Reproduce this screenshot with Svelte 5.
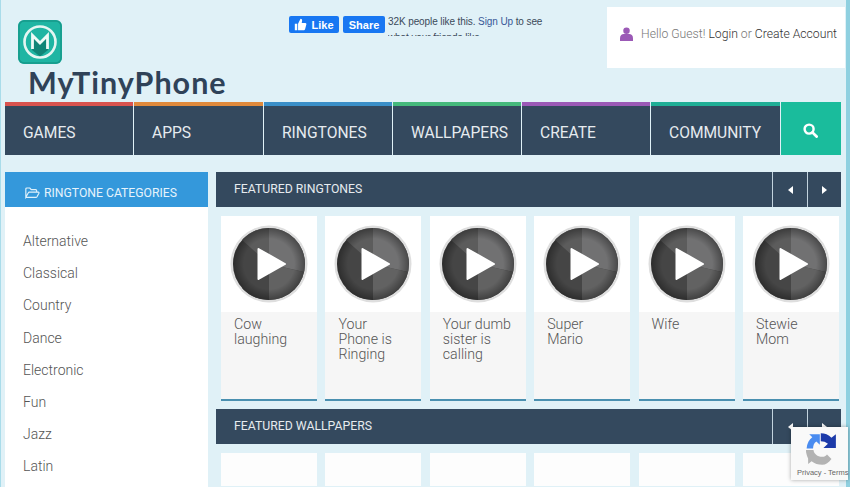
<script>
    const menu = [
        { label: 'GAMES', color: '#d9534f', width: 128 },
        { label: 'APPS', color: '#e08a3c', width: 129 },
        { label: 'RINGTONES', color: '#3a8fc8', width: 128 },
        { label: 'WALLPAPERS', color: '#45b97c', width: 128 },
        { label: 'CREATE', color: '#9b59b6', width: 128 },
        { label: 'COMMUNITY', color: '#1fae96', width: 129 }
    ];

    const categories = ['Alternative', 'Classical', 'Country', 'Dance', 'Electronic', 'Fun', 'Jazz', 'Latin'];

    const ringtones = ['Cow laughing', 'Your Phone is Ringing', 'Your dumb sister is calling', 'Super Mario', 'Wife', 'Stewie Mom'];
</script>

<div class="page">
    <header class="top">
        <div class="brand">
            <svg class="logo" viewBox="0 0 44 44" width="44" height="44">
                <rect width="44" height="44" rx="6" fill="#1fb5a3" />
                <rect x="1" y="1" width="42" height="42" rx="5" fill="none" stroke="#17998b" stroke-width="1.500" />
                <path d="M14 30 L14 16 L22 24 L30 16 L30 30 L22 36.500 Z" fill="#0f8577" />
                <circle cx="22" cy="22" r="15.500" fill="none" stroke="#e4f6f2" stroke-width="2.600" />
                <path d="M14.500 29 V15.500 L22 23 L29.500 15.500 V29" fill="none" stroke="#eefaf7" stroke-width="2.800" />
            </svg>
            <div class="wordmark">MyTinyPhone</div>
        </div>

        <div class="social">
            <span class="fb like">
                <svg viewBox="0 0 16 16" width="13" height="13"><path d="M1 7h3v8H1zM5 7l3-6c1.500 0 2 1 2 2l-.5 3H14c1 0 1.500 1 1.200 2l-1.500 5.500c-.2 1-1 1.500-2 1.500H5z" fill="#fff" /></svg>
                Like
            </span>
            <span class="fb share">Share</span>
            <p class="like-text">32K people like this. <span class="signup">Sign Up</span> to see what your friends like.</p>
        </div>

        <div class="account">
            <svg viewBox="0 0 14 15" width="13" height="14"><circle cx="7" cy="4" r="3.500" fill="#9b59b6" /><path d="M0 15v-3c0-3 2-4.500 4-4.500h6c2 0 4 1.500 4 4.500v3z" fill="#9b59b6" /></svg>
            <span class="hello">Hello Guest! <b>Login</b> or <b>Create Account</b></span>
        </div>
    </header>

    <nav class="menu">
        {#each menu as item}
            <a class="menu-item" style="width: {item.width}px; border-top-color: {item.color};">{item.label}</a>
        {/each}
        <button class="search" aria-label="Search">
            <svg viewBox="0 0 16 16" width="15" height="15"><circle cx="6.500" cy="6.500" r="4.800" fill="none" stroke="#fff" stroke-width="2.600" /><path d="M10 10l4.500 4.500" stroke="#fff" stroke-width="3" stroke-linecap="round" /></svg>
        </button>
    </nav>

    <div class="body">
        <aside class="side">
            <h2 class="side-title">
                <svg viewBox="0 0 18 14" width="15" height="12"><path d="M1 12V2.200C1 1.500 1.500 1 2.200 1h3.600l1.700 2h5.300c.7 0 1.200.5 1.200 1.200V6M1 12l3-5.300c.2-.4.600-.7 1.100-.7H16c.7 0 1 .6.700 1.200l-2.300 4.300c-.3.500-.7.800-1.200.8H2c-.6 0-1-.4-1-.9z" fill="none" stroke="#dff1fb" stroke-width="1.400" /></svg>
                RINGTONE CATEGORIES
            </h2>
            <ul class="cats">
                {#each categories as cat}
                    <li>{cat}</li>
                {/each}
            </ul>
        </aside>

        <main class="main">
            <div class="bar">
                <h2>FEATURED RINGTONES</h2>
                <span class="arrow"><i class="tri left"></i></span>
                <span class="arrow"><i class="tri right"></i></span>
            </div>
            <div class="cards">
                {#each ringtones as title}
                    <div class="card">
                        <div class="thumb">
                            <svg viewBox="0 0 78 78" width="78" height="78">
                                <defs>
                                    <radialGradient id="vignette">
                                        <stop offset="0.7" stop-color="#000" stop-opacity="0" />
                                        <stop offset="1" stop-color="#000" stop-opacity="0.35" />
                                    </radialGradient>
                                </defs>
                                <circle cx="39" cy="39" r="38.500" fill="#dedede" />
                                <circle cx="39" cy="39" r="36" fill="#454545" />
                                <path d="M39 3A36 36 0 0 1 74 47L39 39Z" fill="#717172" />
                                <path d="M39 39L74 47A36 36 0 0 1 39 75Z" fill="#626262" />
                                <path d="M39 39L39 75A36 36 0 0 1 12 63Z" fill="#464646" />
                                <path d="M39 3A36 36 0 0 0 12 15L39 39Z" fill="#5c5c5c" />
                                <circle cx="39" cy="39" r="36" fill="url(#vignette)" />
                                <path d="M28.500 24L55 39L28.500 54Z" fill="#fff" stroke="#fff" stroke-width="2" stroke-linejoin="round" />
                            </svg>
                        </div>
                        <div class="info">{title}</div>
                    </div>
                {/each}
            </div>
            <div class="bar">
                <h2>FEATURED WALLPAPERS</h2>
                <span class="arrow"><i class="tri left"></i></span>
                <span class="arrow"><i class="tri right"></i></span>
            </div>
            <div class="cards">
                {#each ringtones as title}
                    <div class="card blank"></div>
                {/each}
            </div>
        </main>
    </div>

    <div class="recaptcha">
        <svg viewBox="0 0 36 36" width="34" height="34">
            <path d="M1.700 17.500C2 12 4.500 8 7.700 5.500L4.500 2.300H15.700V13.500L12 10C9.500 11.500 8.800 14 8.500 17.500Z" fill="#4a8cf0" />
            <path d="M16.700 1.300C21 1.300 25 2.800 28 6L32.700 2.500V17H19.500L24.300 12.500C22 10.500 19.500 9.700 16.700 9.700Z" fill="#1c3aa9" />
            <path d="M1 19H9C9.500 23 13 26.300 18.300 26.300 20.500 26.300 22 25.500 23.300 23.700L28 28.500C25 32.500 22 34.700 18.300 34.700 14 34.700 10 33.700 7 31L3.300 34V28C2 25 1 22 1 19Z" fill="#b3b3b3" />
        </svg>
        <div class="terms">Privacy - Terms</div>
    </div>
</div>

<style>
    :global(body) {
        margin: 0;
        overflow: hidden;
        background: #e0f1f7;
    }

    .page {
        position: relative;
        height: 487px;
        box-sizing: border-box;
        padding: 0 5px 0 4px;
        font-family: Roboto, "Liberation Sans", sans-serif;
        border-left: 1px solid #a9dcea;
        border-right: 4px solid #8fd0e0;
    }

    .top {
        display: flex;
        height: 102px;
    }

    .brand {
        flex: none;
        width: 283px;
        padding: 20px 0 0 13px;
        box-sizing: border-box;
    }

    .logo {
        display: block;
    }

    .wordmark {
        margin: 1px 0 0 10px;
        font-family: Lato, sans-serif;
        font-weight: 700;
        font-size: 30.500px;
        line-height: 34px;
        letter-spacing: 1px;
        color: #2f4258;
        white-space: nowrap;
    }

    .social {
        flex: none;
        display: flex;
        align-items: flex-start;
        width: 318px;
        height: 36px;
        margin-left: 1px;
        overflow: hidden;
        padding-top: 16px;
        box-sizing: content-box;
    }

    .fb {
        display: flex;
        align-items: center;
        justify-content: center;
        gap: 4px;
        height: 17px;
        border-radius: 2px;
        background: #1877f2;
        color: #fff;
        font: 700 11px "Liberation Sans", sans-serif;
    }

    .like {
        width: 50px;
    }

    .share {
        width: 42px;
        margin-left: 4px;
    }

    .like-text {
        width: 160px;
        height: 22px;
        overflow: hidden;
        margin: -2px 0 0 3px;
        font: 10px/16px "Liberation Sans", sans-serif;
        letter-spacing: -0.1px;
        color: #3b4a5a;
    }

    .signup {
        color: #385898;
    }

    .account {
        flex: none;
        display: flex;
        align-items: center;
        gap: 8px;
        width: 238px;
        height: 61px;
        margin-top: 7px;
        padding: 0 0 7px 13px;
        box-sizing: border-box;
        background: #fff;
        font-size: 12.200px;
        font-weight: 300;
        color: #777;
        white-space: nowrap;
    }

    .hello b {
        font-weight: 300;
        color: #333;
    }

    .menu {
        display: flex;
        gap: 1px;
        width: 836px;
        height: 53px;
    }

    .menu-item {
        display: flex;
        align-items: center;
        box-sizing: border-box;
        padding: 4px 0 0 18px;
        border-top: 4px solid;
        background: #34495e;
        color: #e6ebef;
        font-size: 15.600px;
    }

    .search {
        flex: 1;
        display: flex;
        align-items: center;
        justify-content: center;
        border: 0;
        padding: 3px 2px 0 0;
        background: #1abc9c;
    }

    .body {
        display: flex;
        gap: 8px;
        width: 836px;
        margin-top: 17px;
    }

    .side {
        width: 203px;
        height: 315px;
        background: #fff;
    }

    .side-title {
        display: flex;
        align-items: center;
        gap: 4px;
        height: 35px;
        box-sizing: border-box;
        margin: 0;
        padding: 6px 0 0 20px;
        background: #3498db;
        color: #e6f3fb;
        font-size: 12.200px;
        font-weight: 400;
    }

    .cats {
        list-style: none;
        margin: 0;
        padding: 23px 0 0 18px;
    }

    .cats li {
        height: 32.200px;
        line-height: 22px;
        font-size: 14px;
        font-weight: 300;
        color: #555;
    }

    .main {
        flex: 1;
    }

    .bar {
        display: flex;
        align-items: center;
        height: 35px;
        background: #34495e;
    }

    .bar h2 {
        flex: 1;
        margin: 0;
        padding: 0 0 2px 18px;
        font-size: 12.250px;
        font-weight: 400;
        color: #e6ebef;
    }

    .arrow {
        display: flex;
        align-items: center;
        justify-content: center;
        width: 34px;
        height: 100%;
        border-left: 1px solid #c2d3de;
    }

    .arrow:last-child {
        width: 33px;
    }

    .tri {
        width: 0;
        height: 0;
        border-top: 4px solid transparent;
        border-bottom: 4px solid transparent;
    }

    .tri.left {
        border-right: 5px solid #fff;
    }

    .tri.right {
        border-left: 5px solid #fff;
    }

    .cards {
        display: grid;
        grid-template-columns: repeat(6, 96px);
        column-gap: 8.400px;
        padding: 9px 0 8px 5px;
    }

    .card {
        display: flex;
        flex-direction: column;
        height: 185px;
        box-sizing: border-box;
        background: #f6f6f6;
        border-bottom: 2px solid #4a90b0;
    }

    .card.blank {
        height: 33px;
        border: 0;
        background: #fdfdfd;
    }

    .thumb {
        display: flex;
        align-items: center;
        justify-content: center;
        height: 96px;
        background: #fff;
    }

    .info {
        padding: 5px 13px 0 13px;
        font-size: 14.200px;
        font-weight: 300;
        line-height: 15px;
        color: #555;
    }

    .recaptcha {
        position: absolute;
        left: 790px;
        top: 427px;
        width: 57px;
        height: 53px;
        background: #f9f9f9;
        box-shadow: 0 0 4px rgba(0, 0, 0, 0.35);
    }

    .recaptcha svg {
        display: block;
        margin: 5px 0 0 14px;
    }

    .terms {
        margin: 2px 0 0 6px;
        font: 7.500px "Liberation Sans", sans-serif;
        color: #666;
        white-space: nowrap;
    }
</style>
